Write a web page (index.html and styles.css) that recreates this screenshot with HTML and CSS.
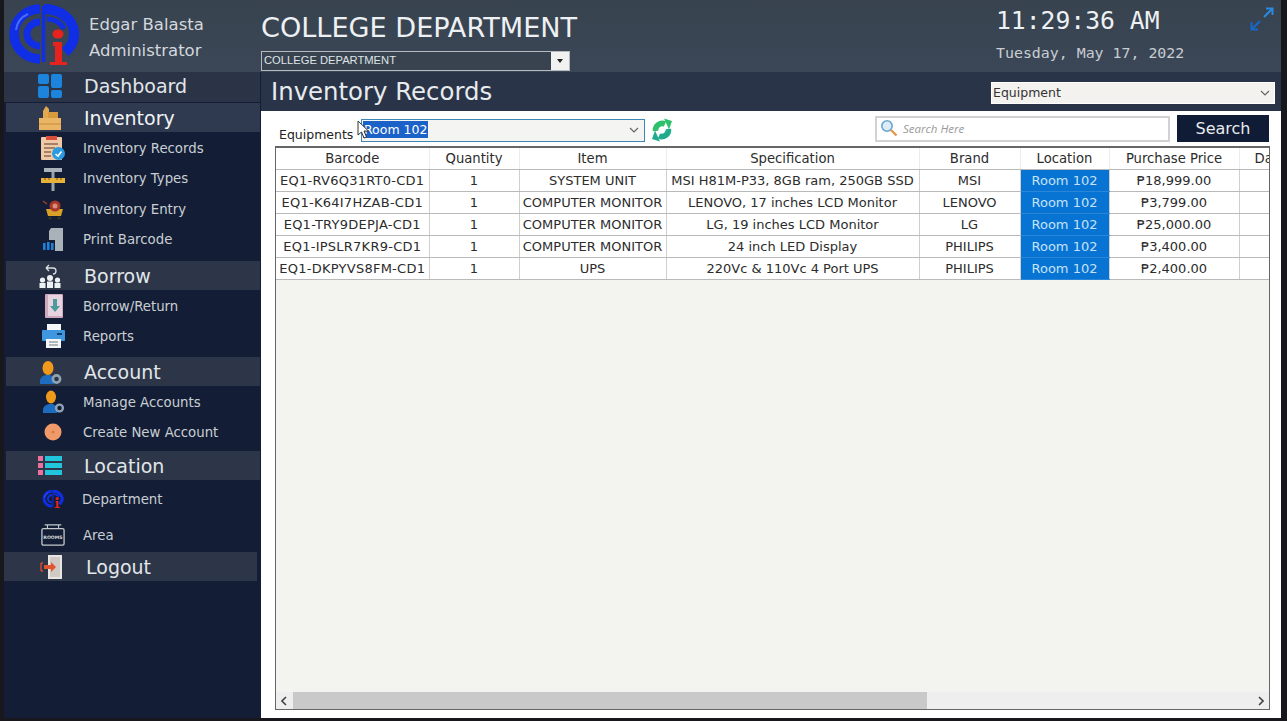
FILE: index.html
```html
<!DOCTYPE html>
<html lang="en">

<head>
    <meta charset="UTF-8">
    <meta name="viewport" content="width=device-width, initial-scale=1.0">
    <title>Inventory Records</title>
    <link rel="stylesheet" href="styles.css">
</head>

<body>
    <svg class="defs" width="0" height="0">
        <symbol id="logo" viewBox="0 0 80 66">
            <g fill="none" stroke="#0f2ee6">
                <path d="M36 7 A26 25 0 1 0 36 57" stroke-width="9.5" />
                <path d="M36 20 A13 12 0 1 0 36 44" stroke-width="7" />
                <path d="M40 7 A30 25 0 0 1 61 50" stroke-width="10" />
                <path d="M43 17 A18 15 0 0 1 60 27" stroke-width="5" />
                <path d="M39.5 4 V60" stroke-width="3.5" />
            </g>
            <path d="M12 28 A20 20 0 0 1 24 12" fill="none" stroke="#4a6cf5" stroke-width="2" />
            <ellipse cx="54" cy="32" rx="5.5" ry="4.5" fill="#e8231d" />
            <path d="M49 40 H58 V60 H63 V63 H46 V60 H51 V44 H49 Z" fill="#e8231d" />
        </symbol>
    </svg>

    <div class="app">
        <header class="topbar">
            <div class="brand">
                <svg class="brand-logo" width="80" height="66"><use href="#logo" /></svg>
                <div class="user">
                    <div>Edgar Balasta</div>
                    <div>Administrator</div>
                </div>
            </div>
            <div class="dept">
                <div class="dept-name">COLLEGE DEPARTMENT</div>
                <div class="dept-select">
                    <span class="dept-value">COLLEGE DEPARTMENT</span>
                    <span class="dept-arrow"></span>
                </div>
            </div>
            <div class="clock">
                <div class="clock-time">11:29:36 AM</div>
                <div class="clock-date">Tuesday, May 17, 2022</div>
            </div>
            <svg class="expand" width="24" height="24" viewBox="0 0 24 24" fill="none" stroke-width="2">
                <path d="M14 10 L22 2 M16 1.5 H22.5 V8" stroke="#2a8ae0" />
                <path d="M10 14 L2 22 M1.5 15 V22.5 H8" stroke="#1668c8" />
            </svg>
        </header>

        <nav class="sidebar">
            <a class="nav-head nav-first">
                <svg class="icon" viewBox="0 0 24 24" fill="#1c84dc">
                    <rect x="0" y="0" width="11" height="10" rx="2" />
                    <rect x="0" y="12" width="11" height="12" rx="2" />
                    <rect x="13" y="0" width="11" height="14" rx="2" />
                    <rect x="13" y="16" width="11" height="8" rx="2" />
                </svg>
                Dashboard
            </a>
            <a class="nav-head nav-active">
                <svg class="icon" viewBox="0 0 24 24">
                    <path d="M5 5 L8 0 L11 3 V12 H5 Z" fill="#e3a94e" />
                    <path d="M10 6 H20 V14 H10 Z" fill="#d89a3e" />
                    <path d="M1 12 H23 V24 H1 Z" fill="#eab564" />
                    <path d="M1 18 H23" stroke="#c98c38" />
                </svg>
                Inventory
            </a>
            <a class="nav-item">
                <svg class="icon" viewBox="0 0 24 24">
                    <rect x="0" y="1" width="21" height="23" rx="1" fill="#f0c9a6" />
                    <rect x="5" y="0" width="11" height="4" fill="#d8503c" />
                    <path d="M3 8 H17 M3 12 H14 M3 16 H10 M3 20 H10" stroke="#8a6a55" stroke-width="1.3" />
                    <circle cx="17.5" cy="17.5" r="6.5" fill="#2a9be0" />
                    <path d="M14.5 18 L17 20 L20.5 15.5" stroke="#fff" stroke-width="1.6" fill="none" />
                </svg>
                Inventory Records
            </a>
            <a class="nav-item nav-tall">
                <svg class="icon" viewBox="0 0 24 24">
                    <rect x="10.5" y="1" width="3" height="23" fill="#9aa3ad" />
                    <path d="M3 1 H21 V5 H3 Z" fill="#aab2ba" />
                    <rect x="0" y="11" width="24" height="5" fill="#e8b13a" />
                    <path d="M4 11 V13 M8 11 V13 M16 11 V13 M20 11 V13" stroke="#7a5a15" />
                </svg>
                Inventory Types
            </a>
            <a class="nav-item">
                <svg class="icon" viewBox="0 0 24 24">
                    <path d="M2 4 L6 7" stroke="#a8402c" stroke-width="1.4" />
                    <path d="M5 12 H22 L20 19 H7 Z" fill="#d8a028" />
                    <circle cx="14" cy="9" r="5.5" fill="#a8372a" />
                    <circle cx="14" cy="9" r="2.5" fill="#d88c7c" />
                    <circle cx="9" cy="21" r="1.6" fill="#3a3026" />
                    <circle cx="18" cy="21" r="1.6" fill="#3a3026" />
                </svg>
                Inventory Entry
            </a>
            <a class="nav-item nav-gap-7">
                <svg class="icon" viewBox="0 0 24 24">
                    <path d="M10 1 H22 V24 H14 V13 H8 V4 Z" fill="#a9b1b9" />
                    <rect x="2" y="16" width="2.6" height="7" fill="#1f80d8" />
                    <rect x="6" y="15" width="2.6" height="8" fill="#1f80d8" />
                    <rect x="10" y="16" width="2.6" height="7" fill="#1f80d8" />
                </svg>
                Print Barcode
            </a>

            <a class="nav-head">
                <svg class="icon" viewBox="0 0 24 24" fill="#eef1f4">
                    <path d="M15 4 H8 M8 4 L11 1 M8 4 L11 7 M15 4 A3 3 0 0 1 15 10" fill="none" stroke="#d8dde2" stroke-width="1.3" />
                    <circle cx="12" cy="14" r="3" />
                    <circle cx="4.5" cy="16" r="2.6" />
                    <circle cx="19.5" cy="16" r="2.6" />
                    <path d="M9 24 V17.5 H15 V24 Z M1.5 24 V19 H7.5 V24 Z M16.5 24 V19 H22.5 V24 Z" />
                </svg>
                Borrow
            </a>
            <a class="nav-item">
                <svg class="icon" viewBox="0 0 24 24">
                    <rect x="4" y="0" width="18" height="24" rx="1" fill="#cfa9c0" />
                    <rect x="7" y="1" width="14" height="21" fill="#e8d4de" />
                    <path d="M12 5 H16 V12 H19 L14 18 L9 12 H12 Z" fill="#4c9a9e" />
                </svg>
                Borrow/Return
            </a>
            <a class="nav-item nav-gap-6">
                <svg class="icon" viewBox="0 0 24 24">
                    <rect x="6" y="0" width="14" height="7" fill="#f4f6f8" />
                    <rect x="1" y="6" width="23" height="11" rx="1" fill="#3f97e0" />
                    <rect x="16" y="9" width="5" height="2" fill="#14406e" />
                    <rect x="5" y="15" width="15" height="9" fill="#f4f6f8" />
                    <path d="M8 18 H17 M8 21 H17" stroke="#6a7680" />
                </svg>
                Reports
            </a>

            <a class="nav-head">
                <svg class="icon" viewBox="0 0 24 24">
                    <ellipse cx="10" cy="8" rx="5.5" ry="7" fill="#f09a1c" />
                    <path d="M2 24 V20 Q3 16 8 15 H12 Q15 16 16 19 V24 Z" fill="#1d6cc0" />
                    <circle cx="18.5" cy="19" r="3.6" fill="none" stroke="#8fa3b5" stroke-width="2.6" />
                </svg>
                Account
            </a>
            <a class="nav-item">
                <svg class="icon" viewBox="0 0 24 24">
                    <ellipse cx="10" cy="7" rx="5" ry="6.5" fill="#f09a1c" />
                    <path d="M2 23 V19 Q3 15 8 14 H12 Q15 15 16 18 V23 Z" fill="#1d6cc0" />
                    <circle cx="18.5" cy="18" r="3.4" fill="none" stroke="#8fa3b5" stroke-width="2.4" />
                </svg>
                Manage Accounts
            </a>
            <a class="nav-item nav-gap-4">
                <svg class="icon" viewBox="0 0 24 24">
                    <circle cx="12" cy="12" r="8.5" fill="#ef9a68" />
                    <circle cx="12" cy="12" r="1.6" fill="#d67e4c" />
                </svg>
                Create New Account
            </a>

            <a class="nav-head">
                <svg class="icon" viewBox="0 0 24 24">
                    <rect x="0" y="2" width="5" height="5" fill="#ef6fa0" />
                    <rect x="0" y="9" width="5" height="5" fill="#ef6fa0" />
                    <rect x="0" y="16" width="5" height="5" fill="#ef6fa0" />
                    <rect x="7" y="2" width="17" height="5" fill="#22c6dc" />
                    <rect x="7" y="9" width="17" height="5" fill="#22c6dc" />
                    <rect x="7" y="16" width="17" height="5" fill="#22c6dc" />
                </svg>
                Location
            </a>
            <a class="nav-item nav-dept">
                <svg class="icon" width="24" height="24"><use href="#logo" /></svg>
                Department
            </a>
            <a class="nav-item nav-area">
                <svg class="icon" viewBox="0 0 26 24">
                    <path d="M4 1 H22 M7 1 V5 M19 1 V5" stroke="#c4c8cc" stroke-width="1.2" />
                    <rect x="1" y="5" width="24" height="18" rx="1.5" fill="none" stroke="#c4c8cc" stroke-width="1.4" />
                    <text class="rooms" x="13" y="16.5" text-anchor="middle">ROOMS</text>
                </svg>
                Area
            </a>
            <a class="nav-head nav-logout">
                <svg class="icon" viewBox="0 0 24 24">
                    <path d="M8 0 H22 V24 H8 Z" fill="#e8e6e2" />
                    <rect x="10" y="2" width="10" height="20" fill="#cfcac4" />
                    <path d="M1 8 V16 M1 8 H3 M1 16 H3" stroke="#d84a30" stroke-width="1.4" fill="none" />
                    <path d="M4 10 H11 V7 L16 12 L11 17 V14 H4 Z" fill="#e0552f" />
                </svg>
                Logout
            </a>
        </nav>

        <main class="content">
            <div class="titlebar">
                <h1>Inventory Records</h1>
                <div class="type-select">
                    <span>Equipment</span>
                    <svg class="chevron" width="10" height="6" viewBox="0 0 10 6"><path d="M1 1 L5 5 L9 1" /></svg>
                </div>
            </div>

            <div class="panel">
                <div class="toolbar">
                    <label class="eq-label">Equipments</label>
                    <div class="room-combo">
                        <span class="room-sel">Room 102</span>
                        <svg class="chevron" width="10" height="6" viewBox="0 0 10 6"><path d="M1 1 L5 5 L9 1" /></svg>
                    </div>
                    <svg class="refresh" width="20" height="24" viewBox="0 0 20 24" fill="none" stroke-width="5.5">
                        <path d="M3.5 13 A6.8 6.8 0 0 1 13 6" stroke="#2fc06c" />
                        <path d="M12 0.5 L20 3 L17 11.5 Z" fill="#2fc06c" />
                        <path d="M16.5 11 A6.8 6.8 0 0 1 7 18" stroke="#1fab8c" />
                        <path d="M8 23.5 L0 21 L3 12.5 Z" fill="#1fab8c" />
                    </svg>
                    <div class="search-box">
                        <svg width="18" height="18" viewBox="0 0 18 18">
                            <circle cx="7" cy="7" r="5.2" fill="#dcecf8" stroke="#6ea6cf" stroke-width="1.6" />
                            <path d="M11 11 L16.5 16.5" stroke="#e09a4a" stroke-width="2.4" />
                        </svg>
                        <span>Search Here</span>
                    </div>
                    <button class="search-btn">Search</button>
                    <svg class="cursor" width="12" height="19" viewBox="0 0 12 19">
                        <path d="M1 1 V15 L4.5 12 L7 18 L9.5 17 L7 11 H11.5 Z" fill="#fff" stroke="#333" />
                    </svg>
                </div>

                <div class="grid">
                    <div class="grid-body">
                        <table>
                            <colgroup>
                                <col class="c-barcode">
                                <col class="c-qty">
                                <col class="c-item">
                                <col class="c-spec">
                                <col class="c-brand">
                                <col class="c-loc">
                                <col class="c-price">
                                <col class="c-cut">
                            </colgroup>
                            <thead>
                                <tr>
                                    <th>Barcode</th>
                                    <th>Quantity</th>
                                    <th>Item</th>
                                    <th>Specification</th>
                                    <th>Brand</th>
                                    <th>Location</th>
                                    <th>Purchase Price</th>
                                    <th class="cut">Da</th>
                                </tr>
                            </thead>
                            <tbody>
                                <tr>
                                    <td class="code">EQ1-RV6Q31RT0-CD1</td>
                                    <td>1</td>
                                    <td>SYSTEM UNIT</td>
                                    <td>MSI H81M-P33, 8GB ram, 250GB SSD</td>
                                    <td>MSI</td>
                                    <td class="loc">Room 102</td>
                                    <td>₱18,999.00</td>
                                    <td></td>
                                </tr>
                                <tr>
                                    <td class="code">EQ1-K64I7HZAB-CD1</td>
                                    <td>1</td>
                                    <td>COMPUTER MONITOR</td>
                                    <td>LENOVO, 17 inches LCD Monitor</td>
                                    <td>LENOVO</td>
                                    <td class="loc">Room 102</td>
                                    <td>₱3,799.00</td>
                                    <td></td>
                                </tr>
                                <tr>
                                    <td class="code">EQ1-TRY9DEPJA-CD1</td>
                                    <td>1</td>
                                    <td>COMPUTER MONITOR</td>
                                    <td>LG, 19 inches LCD Monitor</td>
                                    <td>LG</td>
                                    <td class="loc">Room 102</td>
                                    <td>₱25,000.00</td>
                                    <td></td>
                                </tr>
                                <tr>
                                    <td class="code">EQ1-IPSLR7KR9-CD1</td>
                                    <td>1</td>
                                    <td>COMPUTER MONITOR</td>
                                    <td>24 inch LED Display</td>
                                    <td>PHILIPS</td>
                                    <td class="loc">Room 102</td>
                                    <td>₱3,400.00</td>
                                    <td></td>
                                </tr>
                                <tr>
                                    <td class="code">EQ1-DKPYVS8FM-CD1</td>
                                    <td>1</td>
                                    <td>UPS</td>
                                    <td>220Vc &amp; 110Vc 4 Port UPS</td>
                                    <td>PHILIPS</td>
                                    <td class="loc">Room 102</td>
                                    <td>₱2,400.00</td>
                                    <td></td>
                                </tr>
                            </tbody>
                        </table>
                    </div>
                    <div class="hscroll">
                        <svg class="hs-arrow" width="6" height="10" viewBox="0 0 6 10"><path d="M5 1 L1 5 L5 9" /></svg>
                        <div class="hs-track"><div class="hs-thumb"></div></div>
                        <svg class="hs-arrow" width="6" height="10" viewBox="0 0 6 10"><path d="M1 1 L5 5 L1 9" /></svg>
                    </div>
                </div>
            </div>
        </main>
    </div>
</body>

</html>
```

FILE: styles.css
```css
* {
    box-sizing: border-box;
}

html,
body {
    height: 100%;
}

body {
    margin: 0;
    background: #18181c;
    overflow: hidden;
    font-family: "DejaVu Sans", sans-serif;
}

.defs {
    position: absolute;
}

.app {
    display: grid;
    grid-template-columns: 257px 1fr;
    grid-template-rows: 72px 1fr;
    height: 718px;
    margin: 0 6px 0 4px;
}

/* top bar */
.topbar {
    grid-column: 1 / 3;
    display: flex;
    background: linear-gradient(#38434f, #3b4757);
    color: #e8ecef;
}

.brand {
    display: flex;
    width: 257px;
    padding-top: 2px;
}

.brand-logo {
    flex: none;
}

.user {
    margin-left: 5px;
    padding-top: 10px;
    font-size: 16.5px;
    line-height: 26px;
    color: #d3d8dc;
}

.dept {
    flex: 1;
    padding-top: 12px;
}

.dept-name {
    font-size: 27.1px;
    line-height: 32px;
    color: #eef1f3;
}

.dept-select {
    display: flex;
    justify-content: space-between;
    align-items: center;
    width: 309px;
    height: 20px;
    margin-top: 7px;
    padding-left: 2px;
    border: 1px solid #b5babf;
    font-family: "Liberation Sans", sans-serif;
    font-size: 11.2px;
    color: #dfe3e6;
    background: #39434f;
}

.dept-value {
    margin-bottom: 2px;
}

.dept-arrow {
    display: flex;
    align-items: center;
    justify-content: center;
    width: 18px;
    height: 18px;
    background: #f1f1f1;
}

.dept-arrow::after {
    content: "";
    border: 3px solid transparent;
    border-top: 4px solid #222;
    border-bottom: 0;
}

.clock {
    width: 253px;
    margin-left: -1px;
    padding-top: 6px;
    font-family: "DejaVu Sans Mono", monospace;
}

.clock-time {
    font-size: 24.7px;
    line-height: 30px;
    color: #eef1f3;
}

.clock-date {
    margin-top: 8px;
    font-size: 14.9px;
    line-height: 18px;
    color: #c8cdd2;
}

.expand {
    flex: none;
    margin: 7px 7px 0 1px;
}

/* side menu */
.sidebar {
    background: #131e36;
    color: #d6dade;
}

.sidebar a {
    display: flex;
    align-items: center;
}

.icon {
    flex: none;
    width: 24px;
    height: 24px;
}

.nav-head {
    gap: 22px;
    height: 29px;
    margin: 0 1px 0 2px;
    padding-left: 32px;
    font-size: 19px;
    color: #e2e6e9;
    background: #2d3649;
}

.nav-first {
    height: 30px;
    margin-bottom: 1px;
    margin-left: 0;
    padding: 0 0 2px 34px;
    background: #2b3447;
}

.nav-active {
    background: #2f3a50;
    color: #f1f3f5;
}

.nav-item {
    gap: 18px;
    height: 30px;
    padding-left: 37px;
    font-size: 13.3px;
    color: #c9ced3;
}

.nav-head + .nav-item {
    margin-top: 1px;
}

.nav-tall {
    height: 31px;
}

.nav-gap-7 {
    margin-bottom: 7px;
}

.nav-gap-6 {
    margin-bottom: 6px;
}

.nav-gap-4 {
    margin-bottom: 4px;
}

.nav-head + .nav-dept {
    gap: 17px;
    margin-top: 4px;
}

.nav-area {
    margin-top: 6px;
    margin-bottom: 2px;
}

.nav-logout {
    margin: 0 4px 0 0;
    padding-left: 36px;
    gap: 22px;
}

.rooms {
    font-family: "DejaVu Sans", sans-serif;
    font-size: 5px;
    font-weight: bold;
    fill: #d8dcdf;
}

/* main area */
.content {
    display: flex;
    flex-direction: column;
    min-width: 0;
}

.titlebar {
    display: flex;
    align-items: center;
    justify-content: space-between;
    height: 39px;
    padding: 0 6px 0 10px;
    background: #2a3448;
}

.titlebar h1 {
    margin: 0;
    font-size: 24.4px;
    font-weight: normal;
    color: #e8ebee;
}

.type-select {
    display: flex;
    align-items: center;
    justify-content: space-between;
    width: 284px;
    height: 22px;
    margin-top: 2px;
    padding: 0 4px 0 1px;
    font-size: 12.5px;
    color: #333;
    background: #f3f2ef;
    border: 1px solid #fff;
}

.chevron {
    fill: none;
    stroke: #666;
    stroke-width: 1.2;
}

.panel {
    display: flex;
    flex: 1;
    flex-direction: column;
    min-height: 0;
    padding: 4px 11px 8px 14px;
    background: #fff;
}

.toolbar {
    position: relative;
    display: flex;
    align-items: flex-end;
    height: 27px;
    margin-bottom: 4px;
}

.eq-label {
    width: 82px;
    margin-left: 4px;
    font-size: 12.5px;
    line-height: 15px;
    color: #222;
}

.room-combo {
    display: flex;
    align-items: center;
    justify-content: space-between;
    width: 284px;
    height: 23px;
    padding: 0 5px 2px 1px;
    background: #f4f4f2;
    border: 1px solid #3f86b8;
}

.room-sel {
    padding: 0 1px;
    font-size: 12.5px;
    line-height: 17px;
    color: #fff;
    background: #1b62c8;
}

.refresh {
    flex: none;
    margin-left: 7px;
}

.search-box {
    display: flex;
    align-items: center;
    gap: 5px;
    width: 295px;
    height: 26px;
    margin-left: auto;
    padding: 0 0 2px 3px;
    border: 2px solid #d2d2d2;
    font-family: "Open Sans", sans-serif;
    font-size: 11.5px;
    font-style: italic;
    color: #999;
}

.search-btn {
    width: 92px;
    height: 27px;
    margin: 0 1px 0 7px;
    padding: 0;
    border: none;
    font-family: "DejaVu Sans", sans-serif;
    font-size: 16px;
    color: #e8ebee;
    background: #101c35;
}

.cursor {
    position: absolute;
    top: 5px;
    left: 82px;
}

/* records table */
.grid {
    display: flex;
    flex: 1;
    flex-direction: column;
    min-height: 0;
    border: 1px solid #666;
    border-top-width: 2px;
    background: #f3f3f0;
}

.grid-body {
    flex: 1;
    min-height: 0;
    overflow: hidden;
}

table {
    width: 1118px;
    table-layout: fixed;
    border-collapse: collapse;
    font-size: 13px;
    color: #2c2c2c;
    background: #fff;
}

.c-barcode { width: 153px; }
.c-qty { width: 90px; }
.c-item { width: 147px; }
.c-spec { width: 253px; }
.c-brand { width: 101px; }
.c-loc { width: 89px; }
.c-price { width: 130px; }
.c-cut { width: 155px; }

th,
td {
    height: 22px;
    padding: 0;
    text-align: center;
    white-space: nowrap;
    border-right: 1px solid #cfcfcf;
    border-bottom: 1px solid #b9b9b9;
}

th {
    height: 21px;
    font-size: 13.2px;
    font-weight: normal;
    border-right-color: #ececec;
}

th.cut {
    padding-left: 15px;
    text-align: left;
}

td.code {
    letter-spacing: 0.25px;
}

td.loc {
    color: #c6e2f8;
    background: #0774d4;
    border-bottom-color: #2c86d8;
}

.hscroll {
    display: flex;
    align-items: center;
    height: 17px;
    background: #eeeeee;
}

.hs-arrow {
    flex: none;
    margin: 0 5px;
    fill: none;
    stroke: #444;
    stroke-width: 1.6;
}

.hs-track {
    flex: 1;
    height: 100%;
    margin: 0 0 0 1px;
}

.hs-thumb {
    width: 634px;
    height: 100%;
    background: #c9c9c9;
}
```
